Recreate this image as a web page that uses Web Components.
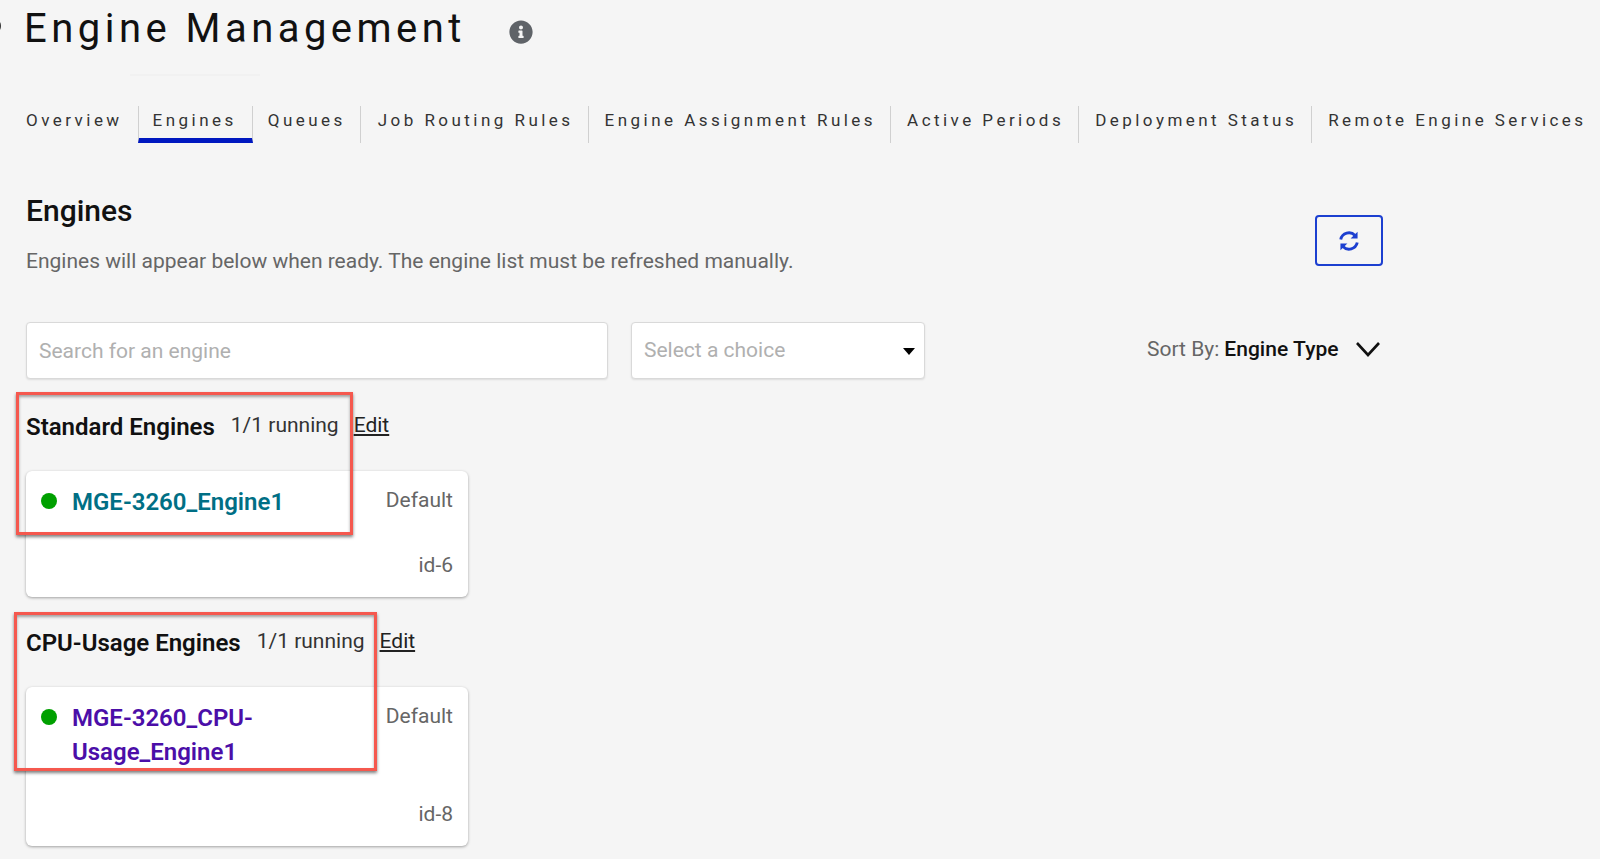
<!DOCTYPE html>
<html><head><meta charset="utf-8"><title>Engine Management</title>
<style>
html,body{margin:0;height:859px;overflow:hidden;background:#f5f5f5;font-family:Roboto,"Liberation Sans",sans-serif}
</style></head><body>
<em-page>
  <page-title slot="title">Engine Management</page-title>
  <tab-bar slot="tabs" active="Engines" items="Overview|Engines|Queues|Job Routing Rules|Engine Assignment Rules|Active Periods|Deployment Status|Remote Engine Services"></tab-bar>
  <engines-head slot="head"></engines-head>
  <filter-bar slot="filters"></filter-bar>
  <engine-group slot="groups" title="Standard Engines" running="1/1 running" box-w="337" box-h="143" box-x="-10" box-y="-13">
    <engine-card name="MGE-3260_Engine1" color="#006f85" ident="id-6" h="126"></engine-card>
  </engine-group>
  <engine-group slot="groups" title="CPU-Usage Engines" running="1/1 running" box-w="363" box-h="159" box-x="-12" box-y="-9">
    <engine-card name="MGE-3260_CPU-Usage_Engine1" color="#4b0ea8" ident="id-8" h="159"></engine-card>
  </engine-group>
</em-page>
<script>
function def(name, html){
  customElements.define(name, class extends HTMLElement{
    connectedCallback(){
      if(this.shadowRoot) return;
      const r=this.attachShadow({mode:'open'});
      r.innerHTML=typeof html==='function'?html(this):html;
    }
  });
}
def('em-page',`<style>
:host{display:block;width:1600px;height:859px;overflow:hidden;box-sizing:border-box;position:relative}
.edge{position:absolute;left:-7px;top:20px;width:8px;height:12px;border:2px solid #333;border-radius:50%;box-sizing:border-box}
.t{display:block;padding:0 0 0 24px}
.hair{width:130px;height:2px;margin:18px 0 0 130px;background:#f1f1f1}
.tabs{display:block;margin-top:30px;padding-left:11px}
.head{display:block;padding:0 217px 0 26px;margin-top:51px}
.f{display:block;padding:0 0 0 26px;margin-top:49px}
.g{display:flex;flex-direction:column;gap:24px;padding-left:26px;margin-top:26px}
</style><div class="edge"></div>
<div class="t"><slot name="title"></slot></div>
<div class="hair"></div>
<div class="tabs"><slot name="tabs"></slot></div>
<div class="head"><slot name="head"></slot></div>
<div class="f"><slot name="filters"></slot></div>
<div class="g"><slot name="groups"></slot></div>`);
def('page-title',`<style>
:host{display:flex;align-items:center;height:56px;color:#111;font-size:40px;font-weight:400;letter-spacing:4.47px;white-space:nowrap}
svg{width:24px;height:24px;margin-left:43px;margin-top:8px;fill:#5f6368;flex:none}
</style><slot></slot><svg viewBox="0 0 512 512" aria-hidden="true"><path d="M256 8C119.043 8 8 119.083 8 256c0 136.997 111.043 248 248 248s248-111.003 248-248C504 119.083 392.957 8 256 8zm0 110c23.196 0 42 18.804 42 42s-18.804 42-42 42-42-18.804-42-42 18.804-42 42-42zm56 254c0 6.627-5.373 12-12 12h-88c-6.627 0-12-5.373-12-12v-24c0-6.627 5.373-12 12-12h12v-64h-12c-6.627 0-12-5.373-12-12v-24c0-6.627 5.373-12 12-12h64c6.627 0 12 5.373 12 12v100h12c6.627 0 12 5.373 12 12v24z"/></svg>`);
def('tab-bar',h=>{
  const items=h.getAttribute('items').split('|'),a=h.getAttribute('active');
  return `<style>
:host{display:flex;height:37px;color:#333;font-size:17px;letter-spacing:3.46px;white-space:nowrap}
.t{box-sizing:border-box;height:37px;padding:0 14px 0 16px;line-height:29px;border-left:1px solid #d0d0d0;flex:none}
.t:first-of-type{border-left:0;padding:0 15px}
.t.on{border-bottom:5px solid #0018c0;border-right:1px solid #d0d0d0;padding:0 15px 0 14px}
.t.on + .t{border-left:0;padding:0 14px 0 15px}
.t.on + .t + .t{padding-left:17px}
</style>`+items.map(t=>`<div class="t${t===a?' on':''}">${t}</div>`).join('');
});
def('engines-head',`<style>
:host{display:flex;justify-content:space-between;align-items:flex-start}
h2{margin:0;font-size:30px;font-weight:500;color:#111;line-height:34px}
p{margin:21px 0 0;font-size:21px;color:#666;line-height:24px}
button{margin:21px 0 0;width:68px;height:51px;box-sizing:border-box;background:transparent;border:2px solid #1c3fd0;border-radius:4px;display:flex;align-items:center;justify-content:center;padding:0}
svg{width:22px;height:22px;fill:none;stroke:#1c3fd0;stroke-width:2.6}
</style><div><h2>Engines</h2><p>Engines will appear below when ready. The engine list must be refreshed manually.</p></div>
<button aria-label="Refresh"><svg viewBox="0 0 20 20"><path d="M2.500 8.600A7.600 7.600 0 0 1 15.500 5"/><path d="M17.500 11.400A7.600 7.600 0 0 1 4.500 15"/><path d="M17.800 1.500v6.300h-6.300z" fill="#1c3fd0" stroke="none"/><path d="M2.200 18.500v-6.300h6.300z" fill="#1c3fd0" stroke="none"/></svg></button>`);
def('filter-bar',`<style>
:host{display:flex;align-items:center;height:57px;font-size:21px}
.box{box-sizing:border-box;height:57px;background:#fff;border:1px solid #d9d9d9;border-radius:4px;color:#b0b0b0;padding:0 12px;display:flex;align-items:center;box-shadow:0 1px 2px rgba(0,0,0,.1)}
.s{width:582px}.c{width:294px;margin-left:23px;justify-content:space-between}
.c span:first-child{margin-top:-2px}
.car{width:0;height:0;border:6px solid transparent;border-top:7px solid #000;border-bottom:0;margin-right:-3px;margin-top:2px}
.sort{margin-left:222px;margin-top:-4px;color:#666;white-space:nowrap;display:flex;align-items:center}
b{color:#111;font-weight:500;margin-left:5px;letter-spacing:.05px}
svg{width:26px;height:16px;margin-left:16px;fill:none;stroke:#111;stroke-width:2.6}
</style><div class="box s">Search for an engine</div><div class="box c"><span>Select a choice</span><span class="car"></span></div>
<div class="sort">Sort By:<b>Engine Type</b><svg viewBox="0 0 26 16"><path d="M2 2l11 12L24 2"/></svg></div>`);
def('engine-group',h=>`<style>
:host{display:block;position:relative;width:442px}
.hd{display:flex;align-items:center;height:44px;margin-bottom:22px;white-space:nowrap}
.n{font-size:24px;font-weight:600;color:#111}
.r{font-size:21px;color:#333;margin-left:16px;margin-top:-4px}
.e{font-size:21px;color:#222;text-decoration:underline;margin-left:15px;margin-top:-4px}
.box{position:absolute;left:${h.getAttribute('box-x')}px;top:${h.getAttribute('box-y')}px;width:${h.getAttribute('box-w')}px;height:${h.getAttribute('box-h')}px;box-sizing:border-box;border:3px solid #f5584e;box-shadow:0 2px 3px rgba(0,0,0,.5),inset 0 2px 3px rgba(0,0,0,.35);pointer-events:none}
</style><div class="hd"><span class="n">${h.getAttribute('title')}</span><span class="r">${h.getAttribute('running')}</span><span class="e">Edit</span></div><slot></slot><div class="box"></div>`);
def('engine-card',h=>`<style>
:host{display:flex;box-sizing:border-box;height:${h.getAttribute('h')}px;background:#fff;border-radius:6px;box-shadow:0 1px 3px rgba(0,0,0,.35);padding:14px 15px 0 15px;font-size:21px;color:#666}
.dot{width:16px;height:16px;border-radius:50%;background:#00a000;flex:none;margin:8px 15px 0 0}
.n{width:270px;font-size:24px;font-weight:600;line-height:34px;color:${h.getAttribute('color')}}
.m{flex:1;display:flex;flex-direction:column;justify-content:space-between;align-items:flex-end;margin-top:1px;padding-bottom:18px}
.m span{line-height:28px}
</style><span class="dot"></span><div class="n">${h.getAttribute('name').replace('CPU-Usage','CPU-<br>Usage')}</div><div class="m"><span>Default</span><span>${h.getAttribute('ident')}</span></div>`);
</script></body></html>
